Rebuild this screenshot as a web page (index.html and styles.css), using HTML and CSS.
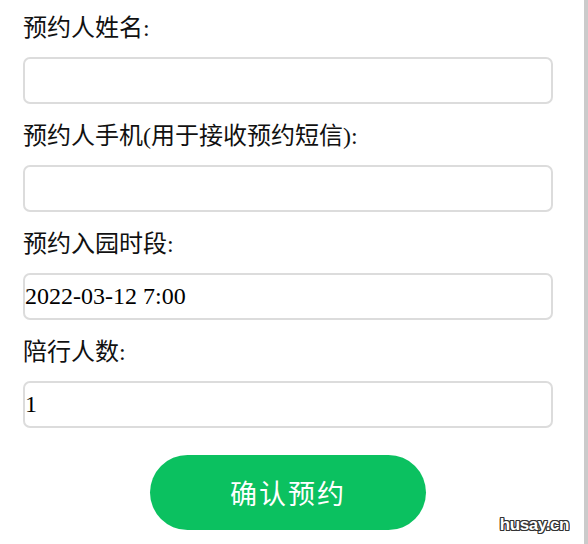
FILE: index.html
```html
<!DOCTYPE html>
<html lang="zh-CN">
  <head>
    <meta charset="UTF-8" />
    <meta name="viewport" content="width=device-width, initial-scale=1.0" />
    <title>预约</title>
    <link rel="stylesheet" href="styles.css">
  </head>
  <body>
    <div class="page">
      <form class="form">
        <div class="field">
          <label class="label" for="name">预约人姓名:</label>
          <input id="name" class="input" type="text" />
        </div>
        <div class="field">
          <label class="label" for="phone">预约人手机(用于接收预约短信):</label>
          <input id="phone" class="input" type="text" />
        </div>
        <div class="field">
          <label class="label" for="time">预约入园时段:</label>
          <input id="time" class="input" type="text" value="2022-03-12 7:00" />
        </div>
        <div class="field">
          <label class="label" for="num">陪行人数:</label>
          <input id="num" class="input" type="text" value="1" />
        </div>
        <button class="btn" type="button">确认预约</button>
      </form>
      <div class="mark">husay.cn</div>
    </div>
  </body>
</html>
```

FILE: styles.css
```css
* {
  box-sizing: border-box;
}
html,
body {
  margin: 0;
  padding: 0;
  background: #fff;
}
.page {
  position: relative;
  width: 588px;
  height: 544px;
  border-right: 4px solid #cbcbcb;
  overflow: hidden;
}
.form {
  display: flex;
  flex-direction: column;
  gap: 14px;
  width: 530px;
  margin-left: 23px;
  padding-top: 10px;
  font-family: 'Liberation Serif', 'Noto Sans CJK SC', serif;
  font-size: 24px;
  color: #111;
}
.field {
  display: flex;
  flex-direction: column;
}
.label {
  line-height: 36px;
  margin-bottom: 11px;
}
.input {
  width: 100%;
  height: 47px;
  padding: 0;
  border: 2px solid #dcdcdc;
  border-radius: 7px;
  background: #fff;
  font-family: 'Liberation Serif', 'Noto Sans CJK SC', serif;
  font-size: 24px;
  color: #000;
  outline: none;
}
.btn {
  display: block;
  width: 276px;
  height: 75px;
  margin: 13px auto 0;
  border: none;
  border-radius: 38px;
  background-color: #0bc160;
  color: #fff;
  font-family: 'Noto Sans CJK SC', sans-serif;
  font-size: 27px;
  letter-spacing: 2px;
}
.mark {
  position: absolute;
  right: 15px;
  bottom: 9px;
  font-family: 'Liberation Sans', sans-serif;
  font-weight: bold;
  font-size: 17px;
  letter-spacing: -0.4px;
  color: #fff;
  text-shadow: 1px 0 0 #333, -1px 0 0 #333, 0 1px 0 #333, 0 -1px 0 #333,
    1px 1px 0 #333, -1px -1px 0 #333, 1px -1px 0 #333, -1px 1px 0 #333;
}
```
